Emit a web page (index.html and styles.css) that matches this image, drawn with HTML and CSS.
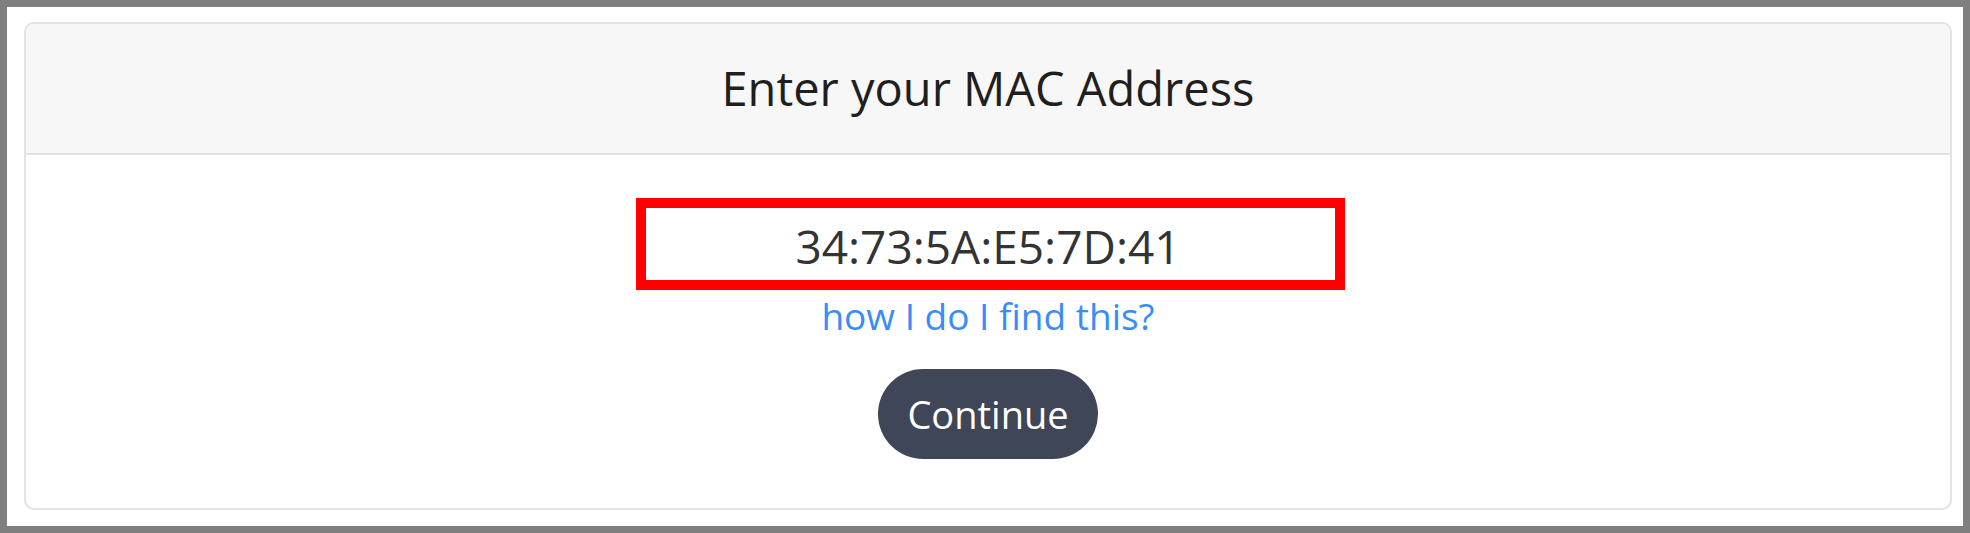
FILE: index.html
```html
<!DOCTYPE html>
<html lang="en">
<head>
<meta charset="utf-8">
<title>Enter your MAC Address</title>
<link rel="stylesheet" href="styles.css">
</head>
<body>
<div class="frame">
  <div class="card">
    <div class="card-header">
      <h1 class="title">Enter your MAC Address</h1>
    </div>
    <div class="card-body">
      <div class="field">
        <input class="mac-input" type="text" value="34:73:5A:E5:7D:41" readonly>
        <div class="highlight"></div>
      </div>
      <a class="help-link" href="#">how I do I find this?</a>
      <button class="btn-continue" type="button">Continue</button>
    </div>
  </div>
</div>
</body>
</html>
```

FILE: styles.css
```css
* { box-sizing: border-box; }
html, body { margin: 0; padding: 0; background: #ffffff; }
body { font-family: "Open Sans", "Noto Sans", "Liberation Sans", sans-serif; }

.frame {
  width: 1970px;
  height: 533px;
  border: 7px solid #7f7f7f;
  padding: 15px 11px 16px 17px;
  background: #ffffff;
}

.card {
  height: 100%;
  border: 2px solid #e3e3e3;
  border-radius: 10px;
  overflow: hidden;
  display: flex;
  flex-direction: column;
}

.card-header {
  height: 131px;
  background: #f7f7f7;
  border-bottom: 2px solid #e1e1e1;
  display: flex;
  align-items: center;
  justify-content: center;
}

.title {
  margin: 0;
  font-size: 47px;
  font-weight: 400;
  color: #1f1f1f;
  line-height: 64px;
  padding-bottom: 2px;
}

.card-body {
  flex: 1;
  display: flex;
  flex-direction: column;
  align-items: center;
  padding-top: 51px;
}

.field {
  position: relative;
  width: 700px;
  height: 80px;
}

.mac-input {
  width: 100%;
  height: 100%;
  border: 1px solid #b8b8b8;
  padding: 0;
  margin: 0;
  font-family: "Open Sans", "Noto Sans", sans-serif;
  font-size: 46px;
  color: #333333;
  text-align: center;
  background: #ffffff;
  outline: none;
}

.highlight {
  position: absolute;
  left: -2px;
  top: -8px;
  width: 709px;
  height: 92px;
  border: 10px solid #ff0000;
  pointer-events: none;
}

.help-link {
  margin-top: 5px;
  font-size: 37px;
  line-height: 50px;
  color: #3a8cf7;
  text-decoration: none;
}

.btn-continue {
  margin-top: 28px;
  width: 220px;
  height: 90px;
  border: none;
  border-radius: 45px;
  background: #3e4657;
  color: #ffffff;
  font-family: "Open Sans", "Noto Sans", sans-serif;
  font-size: 38px;
  padding: 0;
  cursor: pointer;
}
```
